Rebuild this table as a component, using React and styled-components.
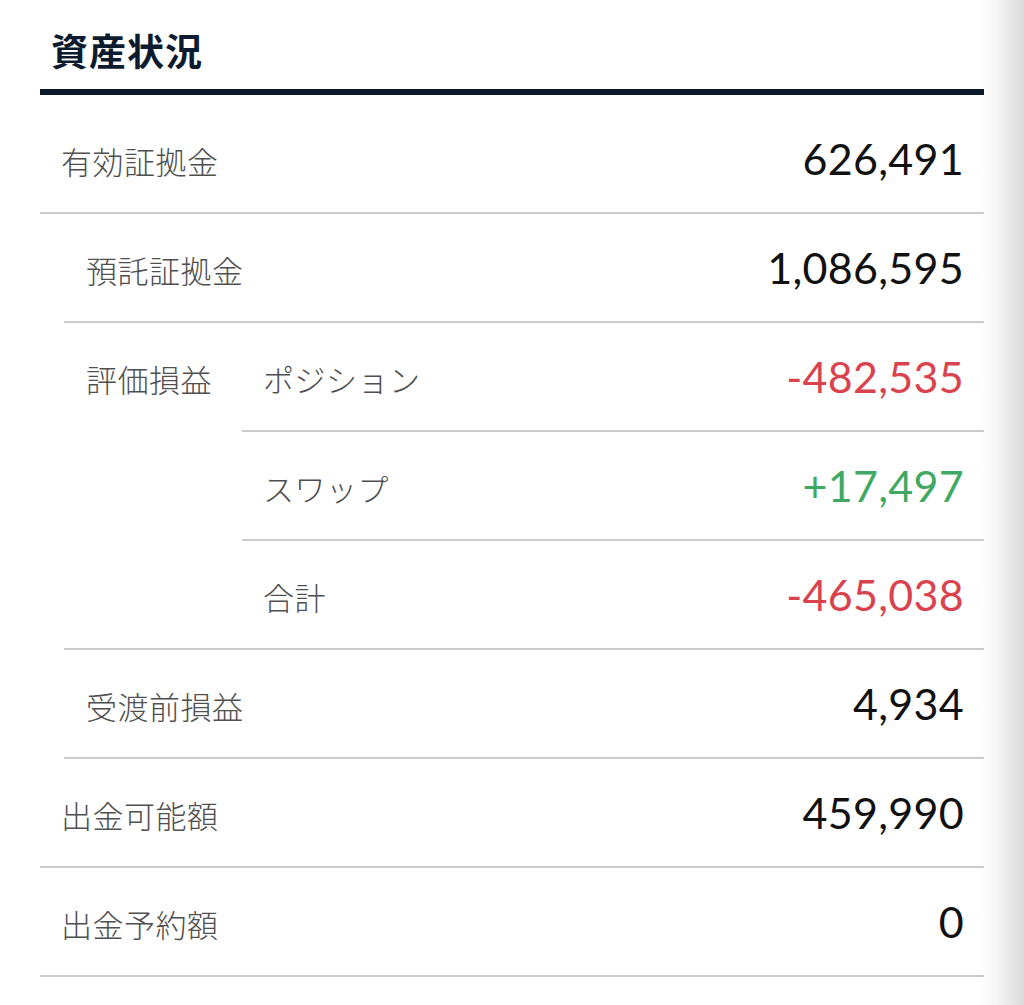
import React from "react";
import styled, { createGlobalStyle } from "styled-components";

const GlobalStyle = createGlobalStyle`
  html, body {
    margin: 0;
    padding: 0;
  }
  body {
    min-height: 1005px;
    background: linear-gradient(
      to right,
      #ffffff 0,
      #ffffff 978px,
      #f6f6f6 996px,
      #e6e6e6 1012px,
      #d9d9d9 1024px
    );
    font-family: Lato, "Noto Sans CJK JP", sans-serif;
  }
`;

const Panel = styled.section`
  margin-left: 40px;
  width: 944px;
`;

const Header = styled.header`
  box-sizing: border-box;
  height: 95px;
  padding: 11px 0 0 11px;
  display: flex;
  align-items: center;
  border-bottom: 6px solid #0c1a2c;
`;

const Title = styled.h1`
  margin: 0;
  font-family: "Noto Sans CJK JP", sans-serif;
  font-weight: 700;
  font-size: 37px;
  letter-spacing: 1px;
  color: #0d1b2e;
  line-height: 1;
`;

const List = styled.div`
  padding-top: 10px;
`;

const Row = styled.div`
  display: flex;
  align-items: center;
  justify-content: space-between;
  height: 107px;
  border-bottom: ${(p) => (p.$last ? "none" : "2px solid #cbcbcb")};
`;

const Block = styled.div`
  margin-left: ${(p) => p.$indent || 0}px;
  border-bottom: 2px solid #cbcbcb;
`;

const Label = styled.span`
  font-family: "Noto Sans CJK JP", sans-serif;
  font-weight: 300;
  font-size: 31px;
  color: #4f4f4f;
  padding-left: ${(p) => p.$pad}px;
  padding-top: 4px;
  letter-spacing: 0.5px;
`;

const Value = styled.span`
  font-family: Lato, sans-serif;
  font-size: 43px;
  font-weight: 400;
  color: ${(p) =>
    p.$tone === "neg" ? "#d8434f" : p.$tone === "pos" ? "#3fa963" : "#111111"};
  padding-right: 20px;
  letter-spacing: 0.3px;
`;

const Group = styled.div`
  display: flex;
`;

const GroupLabel = styled.div`
  width: 178px;
  height: 107px;
  display: flex;
  align-items: center;
  flex-shrink: 0;
`;

const SubRows = styled.div`
  flex: 1;
`;

const SubRow = styled(Row)`
  &:last-child {
    border-bottom: none;
  }
`;

export default function App() {
  return (
    <>
      <GlobalStyle />
      <Panel>
        <Header>
          <Title>資産状況</Title>
        </Header>
        <List>
          <Block>
            <Row $last>
              <Label $pad={21}>有効証拠金</Label>
              <Value>626,491</Value>
            </Row>
          </Block>
          <Block $indent={24}>
            <Row $last>
              <Label $pad={22}>預託証拠金</Label>
              <Value>1,086,595</Value>
            </Row>
          </Block>
          <Block $indent={24}>
            <Group>
              <GroupLabel>
                <Label $pad={22}>評価損益</Label>
              </GroupLabel>
              <SubRows>
                <SubRow>
                  <Label $pad={21}>ポジション</Label>
                  <Value $tone="neg">-482,535</Value>
                </SubRow>
                <SubRow>
                  <Label $pad={21}>スワップ</Label>
                  <Value $tone="pos">+17,497</Value>
                </SubRow>
                <SubRow>
                  <Label $pad={21}>合計</Label>
                  <Value $tone="neg">-465,038</Value>
                </SubRow>
              </SubRows>
            </Group>
          </Block>
          <Block $indent={24}>
            <Row $last>
              <Label $pad={22}>受渡前損益</Label>
              <Value>4,934</Value>
            </Row>
          </Block>
          <Block>
            <Row $last>
              <Label $pad={21}>出金可能額</Label>
              <Value>459,990</Value>
            </Row>
          </Block>
          <Block>
            <Row $last>
              <Label $pad={21}>出金予約額</Label>
              <Value>0</Value>
            </Row>
          </Block>
        </List>
      </Panel>
    </>
  );
}
